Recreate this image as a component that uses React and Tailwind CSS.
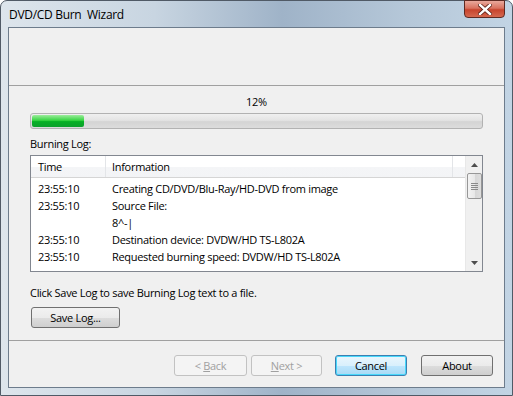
import React from "react";

const rows = [
  { time: "23:55:10", info: "Creating CD/DVD/Blu-Ray/HD-DVD from image" },
  { time: "23:55:10", info: "Source File:" },
  { time: "", info: "8^-|" },
  { time: "23:55:10", info: "Destination device: DVDW/HD TS-L802A" },
  { time: "23:55:10", info: "Requested burning speed: DVDW/HD TS-L802A" },
];

const WinButton = ({ children, disabled, focused, className = "" }) => (
  <button
    className={`h-[21px] rounded-[3px] border text-[11px] leading-none tracking-[-0.3px] ${
      disabled
        ? "border-[#c2c2c2] bg-[#f4f4f4] text-[#a0a0a0]"
        : focused
        ? "border-[#3c7fb1] bg-[linear-gradient(#eaf6fd_0%,#d9f0fc_50%,#bee6fd_51%,#a7d9f5_100%)] text-black shadow-[inset_0_0_0_1px_#48d8fb]"
        : "border-[#707070] bg-[linear-gradient(#f2f2f2_0%,#ebebeb_50%,#dddddd_51%,#cfcfcf_100%)] text-black"
    } ${className}`}
  >
    {children}
  </button>
);

export default function App() {
  return (
    <div className="w-[513px] h-[396px] overflow-hidden bg-white font-['Open_Sans',sans-serif] text-[11px] tracking-[-0.3px] text-black">
      <div className="w-full h-full rounded-t-[7px] border border-[#505a66] bg-[linear-gradient(90deg,#dde5ec_0%,#c8d5e1_30%,#9fb3c8_55%,#b6c8d9_80%,#c2d4e4_100%)] flex flex-col">
        {/* Title bar */}
        <div className="h-[26px] flex items-start justify-between shrink-0">
          <span className="ml-[8px] mt-[5px] text-[12px]">
            DVD/CD Burn&nbsp; Wizard
          </span>
          <div className="mr-[7px] w-[41px] h-[18px] -mt-px rounded-b-[4px] border border-[#5e2a22] bg-[linear-gradient(#e9a99c_0%,#d9725f_45%,#c7442d_55%,#d5684f_100%)] flex items-center justify-center">
            <svg width="14" height="11" viewBox="0 0 14 11">
              <path d="M2 1 L12 10 M12 1 L2 10" stroke="#5a1e14" strokeWidth="4" strokeLinecap="square" />
              <path d="M2 1 L12 10 M12 1 L2 10" stroke="#ffffff" strokeWidth="2.4" strokeLinecap="square" />
            </svg>
          </div>
        </div>

        {/* Client area */}
        <div className="mx-[7px] flex-1 border border-[#6d7c8c] bg-[#f0f0f0] flex flex-col">
          <div className="h-[58px] shrink-0 border-b border-[#a0a0a0]" />

          <div className="flex-1 px-[21px] flex flex-col">
            <div className="mt-[8px] text-center leading-[16px]">12%</div>
            <div className="mt-[3px] h-[16px] rounded-[3px] border border-[#b2b2b2] bg-[linear-gradient(#f0f0f0_0%,#e4e4e4_45%,#d4d4d4_55%,#dcdcdc_100%)] overflow-hidden p-px">
              <div className="h-full w-[52px] rounded-[2px] bg-[linear-gradient(#9cec9c_0%,#37d442_45%,#06b025_55%,#0ca02c_100%)]" />
            </div>

            <div className="mt-[7px] leading-[16px]">Burning Log:</div>
            <div className="mt-[3px] h-[117px] border border-[#828790] bg-white flex">
              <div className="flex-1 flex flex-col">
                <div className="h-[22px] flex border-b border-[#d5d5d5] bg-[linear-gradient(#ffffff_0%,#ffffff_50%,#f4f5f7_51%,#f3f4f6_100%)]">
                  <div className="w-[75px] pl-[7px] pt-[2px] flex items-center border-r border-[#e3e5e8]">Time</div>
                  <div className="w-[347px] pl-[6px] pt-[2px] flex items-center border-r border-[#e3e5e8]">Information</div>
                  <div className="flex-1" />
                </div>
                <div className="pt-[2px]">
                  {rows.map((r, i) => (
                    <div key={i} className="h-[17px] flex items-center leading-none">
                      <div className="w-[75px] pl-[7px]">{r.time}</div>
                      <div className="pl-[6px]">{r.info}</div>
                    </div>
                  ))}
                </div>
              </div>
              {/* Scrollbar */}
              <div className="w-[17px] bg-[#f0f0f0] border-l border-[#e8e8e8] flex flex-col items-center">
                <div className="h-[17px] flex items-center justify-center">
                  <svg width="7" height="4" viewBox="0 0 7 4"><path d="M0 4 L3.5 0 L7 4 Z" fill="#4d4d4d" /></svg>
                </div>
                <div className="w-[15px] h-[26px] rounded-[2px] border border-[#979797] bg-[linear-gradient(90deg,#f3f3f3_0%,#e8e8e8_50%,#d6d6d6_51%,#dedede_100%)] flex flex-col items-center justify-center gap-[1px]">
                  <div className="w-[7px] h-px bg-[#8a8a8a]" />
                  <div className="w-[7px] h-px bg-[#8a8a8a]" />
                  <div className="w-[7px] h-px bg-[#8a8a8a]" />
                  <div className="w-[7px] h-px bg-[#8a8a8a]" />
                </div>
                <div className="flex-1" />
                <div className="h-[17px] flex items-center justify-center">
                  <svg width="7" height="4" viewBox="0 0 7 4"><path d="M0 0 L3.5 4 L7 0 Z" fill="#4d4d4d" /></svg>
                </div>
              </div>
            </div>

            <div className="mt-[13px] leading-[16px]">Click Save Log to save Burning Log text to a file.</div>
            <WinButton className="mt-[6px] ml-px w-[89px] self-start">Save Log...</WinButton>
          </div>

          {/* Bottom buttons */}
          <div className="h-[47px] shrink-0 border-t border-[#a0a0a0] flex items-start justify-end pr-[11px] pt-[14px]">
            <WinButton disabled className="w-[73px]">&lt; <span className="underline">B</span>ack</WinButton>
            <WinButton disabled className="ml-[4px] w-[71px]"><span className="underline">N</span>ext &gt;</WinButton>
            <WinButton focused className="ml-[13px] w-[72px]">Cancel</WinButton>
            <WinButton className="ml-[14px] w-[72px]">About</WinButton>
          </div>
        </div>
        <div className="h-[7px] shrink-0" />
      </div>
    </div>
  );
}
